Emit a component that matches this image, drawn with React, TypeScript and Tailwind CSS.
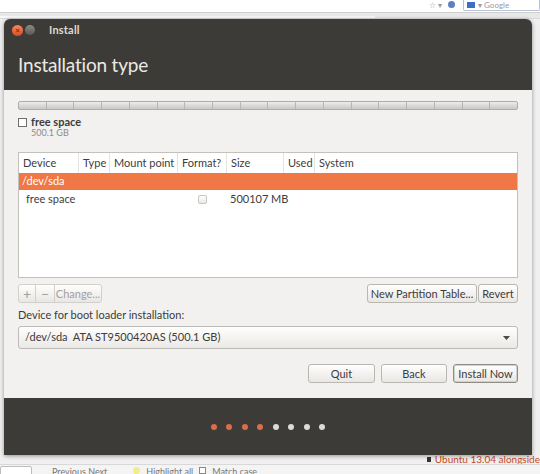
import { ReactNode } from "react";

const DOTS = [true, true, true, true, false, false, false, false];

const COLUMNS = ["Device", "Type", "Mount point", "Format?", "Size", "Used", "System"];

function Btn({
  children,
  className = "",
  focus = false,
  disabled = false,
}: {
  children: ReactNode;
  className?: string;
  focus?: boolean;
  disabled?: boolean;
}) {
  return (
    <div
      className={`flex items-center justify-center whitespace-nowrap rounded-[3px] border bg-gradient-to-b from-[#fefefe] to-[#e9e7e4] text-[11px] leading-none ${
        focus
          ? "border-[#8f8d88] shadow-[inset_0_0_0_1px_#d2d0cb]"
          : disabled
            ? "border-[#d2d0cc] text-[#a3a19d]"
            : "border-[#b9b7b2] text-[#3c3c3c]"
      } ${className}`}
    >
      {children}
    </div>
  );
}

function PartitionBar() {
  return (
    <div className="flex h-[9px] overflow-hidden rounded-[2px] border border-[#aeada9] bg-gradient-to-b from-[#ececea] to-[#c8c8c5]">
      {Array.from({ length: 18 }).map((_, i) => (
        <div key={i} className="h-full flex-1 border-r border-[#b6b5b1] last:border-r-0" />
      ))}
    </div>
  );
}

function Table() {
  return (
    <div className="mt-[14px] h-[126px] border border-[#c3c1bc] bg-white">
      <div className="grid h-[20px] grid-cols-[60px_31px_68px_49px_57px_31px_1fr] items-center text-[11px] text-[#3c3c3c]">
        {COLUMNS.map((c, i) => (
          <div
            key={c}
            className={`flex h-full items-center whitespace-nowrap pl-[4px] ${
              i < COLUMNS.length - 1 ? "border-r border-[#e6e4e0]" : ""
            }`}
          >
            {c}
          </div>
        ))}
      </div>
      <div className="flex h-[17px] items-center bg-[#f07746] pl-[3px] text-[11px] text-white">/dev/sda</div>
      <div className="grid h-[18px] grid-cols-[60px_31px_68px_49px_57px_31px_1fr] items-center whitespace-nowrap text-[11px] text-[#3c3c3c]">
        <div className="pl-[7px]">free space</div>
        <div />
        <div />
        <div className="flex justify-end pr-[20px]">
          <div className="h-[9px] w-[9px] rounded-[2px] border border-[#c9c7c3] bg-gradient-to-b from-white to-[#ebe9e6]" />
        </div>
        <div className="pl-[3px]">500107 MB</div>
        <div />
        <div />
      </div>
    </div>
  );
}

function Window() {
  return (
    <div className="absolute left-[4px] top-[19px] flex h-[436px] w-[528px] flex-col overflow-hidden rounded-t-[6px] shadow-[0_1px_4px_rgba(0,0,0,0.4)]">
      {/* header */}
      <div className="h-[71px] bg-[#3c3b37]">
        <div className="flex h-[22px] items-center pl-[8px]">
          <div className="flex h-[11px] w-[11px] items-center justify-center rounded-full bg-gradient-to-b from-[#f58a5e] to-[#d9491f] text-[8px] font-bold leading-none text-[#7a2a10]">
            ×
          </div>
          <div className="ml-[2px] h-[10px] w-[10px] rounded-full bg-gradient-to-b from-[#8c8a85] to-[#5b5a56]" />
          <div className="ml-[14px] text-[11px] font-bold tracking-[0.2px] text-[#dfdbd2]">Install</div>
        </div>
        <div className="pl-[14px] pt-[12px] text-[19px] leading-[24px] tracking-[-0.2px] text-[#ebe9e4]">
          Installation type
        </div>
      </div>

      {/* content */}
      <div className="flex h-[308px] flex-col bg-[#f2f1f0] px-[14px] text-[#3c3c3c]">
        <div className="mt-[11px]">
          <PartitionBar />
        </div>
        <div className="mt-[6px] flex">
          <div className="mt-[2px] h-[9px] w-[9px] border border-[#6f6e6a] bg-white" />
          <div className="ml-[4px]">
            <div className="text-[11px] font-bold leading-[12px]">free space</div>
            <div className="text-[9px] leading-[10px] text-[#8d8b87]">500.1 GB</div>
          </div>
        </div>

        <Table />

        <div className="mt-[6px] flex h-[19px] justify-between">
          <div className="flex h-full">
            <Btn disabled className="w-[18px] rounded-r-none text-[14px] text-[#8d8b87]">
              +
            </Btn>
            <Btn disabled className="-ml-px w-[20px] rounded-none text-[14px] text-[#8d8b87]">
              −
            </Btn>
            <Btn disabled className="-ml-px w-[48px] rounded-l-none">
              Change...
            </Btn>
          </div>
          <div className="flex h-full gap-[1px]">
            <Btn className="w-[110px]">New Partition Table...</Btn>
            <Btn className="w-[40px]">Revert</Btn>
          </div>
        </div>

        <div className="mt-[6px] text-[11px] leading-[12px]">Device for boot loader installation:</div>

        <div className="mt-[5px] flex h-[23px] items-center justify-between rounded-[3px] border border-[#bdbbb6] bg-gradient-to-b from-[#fefefe] to-[#ebe9e6] pl-[6px] pr-[7px] text-[11px]">
          <span className="whitespace-pre">/dev/sda  ATA ST9500420AS (500.1 GB)</span>
          <svg width="7" height="4" viewBox="0 0 7 4">
            <path d="M0 0H7L3.5 4Z" fill="#4a4a48" />
          </svg>
        </div>

        <div className="mt-[15px] flex h-[19px] justify-end gap-[6px]">
          <Btn className="w-[67px]">Quit</Btn>
          <Btn className="w-[66px]">Back</Btn>
          <Btn focus className="w-[65px] text-[#3c3c3c]">
            Install Now
          </Btn>
        </div>
      </div>

      {/* footer */}
      <div className="flex flex-1 items-center justify-center gap-[9.5px] bg-[#3c3b37]">
        {DOTS.map((on, i) => (
          <div key={i} className={`h-[6px] w-[6px] rounded-full ${on ? "bg-[#dd6d45]" : "bg-[#dcdbd8]"}`} />
        ))}
      </div>
    </div>
  );
}

export default function App() {
  return (
    <div className="relative flex h-[474px] w-[540px] flex-col overflow-hidden bg-[#f0f0f0] font-['Lato','Roboto',sans-serif]">
      {/* browser toolbar behind */}
      <div className="flex h-[13px] items-start justify-end border-b border-[#cfcfcf] bg-white">
        <div className="mr-[6px] mt-[1px] text-[8px] leading-[9px] text-[#9a9a9a]">☆ ▾</div>
        <div className="mr-[8px] mt-[1px] h-[7px] w-[7px] rounded-full bg-[#5f7fc4]" />
        <div className="flex h-[11px] w-[77px] items-center gap-[3px] rounded-b-[2px] border border-t-0 border-[#b9c3d4] pl-[3px]">
          <div className="h-[6px] w-[8px] bg-[#3b6fc7]" />
          <span className="text-[8px] leading-[9px] text-[#9a9a9a]">▾ Google</span>
        </div>
      </div>
      <div className="h-[6px] border-b border-[#dadada] bg-[#e8e8e8]">
        <div className="mt-[3px] h-[2px] w-[375px] bg-[#f8f8f8]" />
      </div>

      <div className="flex-1" />

      {/* desktop text below the window */}
      <div className="flex h-[10px] items-end justify-end">
        <div className="flex w-[113px] items-center gap-[4px] text-[10px] leading-[10px] text-[#c6481f]">
          <div className="h-[5px] w-[5px] bg-[#333]" />
          <span className="whitespace-nowrap">Ubuntu 13.04 alongside</span>
        </div>
      </div>
      <div className="h-[10px] border-t border-[#d8d8d8] bg-[#f4f4f4]">
        <div className="flex items-start gap-[6px] text-[9px] leading-none text-[#777]">
          <div className="mt-[1px] h-[12px] w-[32px] rounded-[2px] border border-[#bdbdbd] bg-white" />
          <span className="ml-[14px] mt-[2px] whitespace-nowrap">Previous   Next</span>
          <span className="ml-[20px] mt-[2px] h-[7px] w-[7px] rounded-full bg-[#f1ee8a]" />
          <span className="mt-[2px] whitespace-nowrap">Highlight all</span>
          <span className="mt-[2px] h-[7px] w-[7px] border border-[#888] bg-white" />
          <span className="mt-[2px] whitespace-nowrap">Match case</span>
        </div>
      </div>

      <Window />
    </div>
  );
}
